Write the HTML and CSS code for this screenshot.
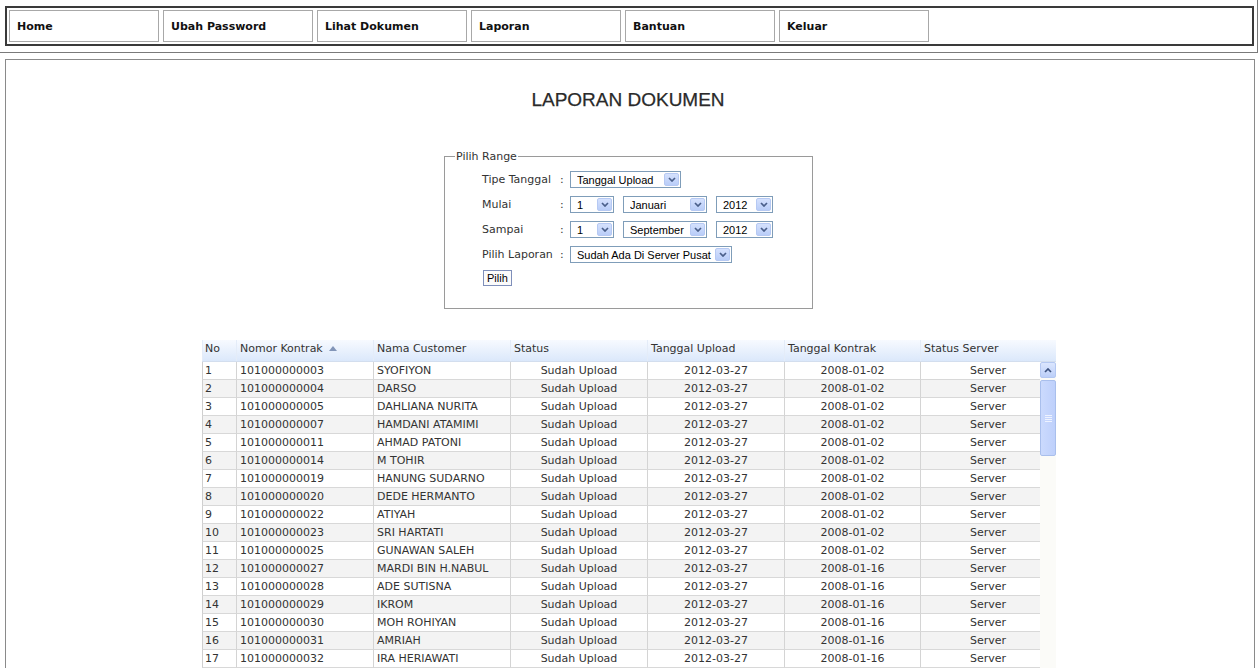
FILE: index.html
```html
<!DOCTYPE html>
<html>
<head>
<meta charset="utf-8">
<title>Laporan Dokumen</title>
<link rel="stylesheet" href="styles.css">
</head>
<body>
<div class="topframe">
  <nav class="nav">
    <a class="nav-btn">Home</a>
    <a class="nav-btn">Ubah Password</a>
    <a class="nav-btn">Lihat Dokumen</a>
    <a class="nav-btn">Laporan</a>
    <a class="nav-btn">Bantuan</a>
    <a class="nav-btn">Keluar</a>
  </nav>
</div>
<main class="content">
  <h1 class="title">LAPORAN DOKUMEN</h1>
  <fieldset class="range">
    <legend>Pilih Range</legend>
    <div class="range-body">
      <div class="form-row">
        <span class="lbl">Tipe Tanggal</span><span class="colon">:</span>
        <div class="ctrls"><span class="sel w-tipe"><span class="sel-txt">Tanggal Upload</span><span class="arr"><svg width="8" height="5" viewBox="0 0 8 5"><path d="M1 1L4 4L7 1" stroke="#4a5f8a" stroke-width="1.7" fill="none"/></svg></span></span></div>
      </div>
      <div class="form-row">
        <span class="lbl">Mulai</span><span class="colon">:</span>
        <div class="ctrls">
          <span class="sel w-day"><span class="sel-txt">1</span><span class="arr"><svg width="8" height="5" viewBox="0 0 8 5"><path d="M1 1L4 4L7 1" stroke="#4a5f8a" stroke-width="1.7" fill="none"/></svg></span></span>
          <span class="sel w-month"><span class="sel-txt">Januari</span><span class="arr"><svg width="8" height="5" viewBox="0 0 8 5"><path d="M1 1L4 4L7 1" stroke="#4a5f8a" stroke-width="1.7" fill="none"/></svg></span></span>
          <span class="sel w-year"><span class="sel-txt">2012</span><span class="arr"><svg width="8" height="5" viewBox="0 0 8 5"><path d="M1 1L4 4L7 1" stroke="#4a5f8a" stroke-width="1.7" fill="none"/></svg></span></span>
        </div>
      </div>
      <div class="form-row">
        <span class="lbl">Sampai</span><span class="colon">:</span>
        <div class="ctrls">
          <span class="sel w-day"><span class="sel-txt">1</span><span class="arr"><svg width="8" height="5" viewBox="0 0 8 5"><path d="M1 1L4 4L7 1" stroke="#4a5f8a" stroke-width="1.7" fill="none"/></svg></span></span>
          <span class="sel w-month"><span class="sel-txt">September</span><span class="arr"><svg width="8" height="5" viewBox="0 0 8 5"><path d="M1 1L4 4L7 1" stroke="#4a5f8a" stroke-width="1.7" fill="none"/></svg></span></span>
          <span class="sel w-year"><span class="sel-txt">2012</span><span class="arr"><svg width="8" height="5" viewBox="0 0 8 5"><path d="M1 1L4 4L7 1" stroke="#4a5f8a" stroke-width="1.7" fill="none"/></svg></span></span>
        </div>
      </div>
      <div class="form-row">
        <span class="lbl">Pilih Laporan</span><span class="colon">:</span>
        <div class="ctrls"><span class="sel w-lap"><span class="sel-txt">Sudah Ada Di Server Pusat</span><span class="arr"><svg width="8" height="5" viewBox="0 0 8 5"><path d="M1 1L4 4L7 1" stroke="#4a5f8a" stroke-width="1.7" fill="none"/></svg></span></span></div>
      </div>
      <div class="btn-row"><button class="btn">Pilih</button></div>
    </div>
  </fieldset>

  <div class="grid">
    <div class="grow ghead">
      <div class="hc">No</div>
      <div class="hc">Nomor Kontrak <svg class="sort" width="8" height="5" viewBox="0 0 8 5"><path d="M0 5L4 0L8 5Z" fill="#8295b8"/></svg></div>
      <div class="hc">Nama Customer</div>
      <div class="hc">Status</div>
      <div class="hc">Tanggal Upload</div>
      <div class="hc">Tanggal Kontrak</div>
      <div class="hc">Status Server</div>
    </div>
    <div class="gbody">
      <div class="grow"><div class="c">1</div><div class="c">101000000003</div><div class="c">SYOFIYON</div><div class="c ctr">Sudah Upload</div><div class="c ctr">2012-03-27</div><div class="c ctr">2008-01-02</div><div class="c ctr">Server</div></div>
      <div class="grow"><div class="c">2</div><div class="c">101000000004</div><div class="c">DARSO</div><div class="c ctr">Sudah Upload</div><div class="c ctr">2012-03-27</div><div class="c ctr">2008-01-02</div><div class="c ctr">Server</div></div>
      <div class="grow"><div class="c">3</div><div class="c">101000000005</div><div class="c">DAHLIANA NURITA</div><div class="c ctr">Sudah Upload</div><div class="c ctr">2012-03-27</div><div class="c ctr">2008-01-02</div><div class="c ctr">Server</div></div>
      <div class="grow"><div class="c">4</div><div class="c">101000000007</div><div class="c">HAMDANI ATAMIMI</div><div class="c ctr">Sudah Upload</div><div class="c ctr">2012-03-27</div><div class="c ctr">2008-01-02</div><div class="c ctr">Server</div></div>
      <div class="grow"><div class="c">5</div><div class="c">101000000011</div><div class="c">AHMAD PATONI</div><div class="c ctr">Sudah Upload</div><div class="c ctr">2012-03-27</div><div class="c ctr">2008-01-02</div><div class="c ctr">Server</div></div>
      <div class="grow"><div class="c">6</div><div class="c">101000000014</div><div class="c">M TOHIR</div><div class="c ctr">Sudah Upload</div><div class="c ctr">2012-03-27</div><div class="c ctr">2008-01-02</div><div class="c ctr">Server</div></div>
      <div class="grow"><div class="c">7</div><div class="c">101000000019</div><div class="c">HANUNG SUDARNO</div><div class="c ctr">Sudah Upload</div><div class="c ctr">2012-03-27</div><div class="c ctr">2008-01-02</div><div class="c ctr">Server</div></div>
      <div class="grow"><div class="c">8</div><div class="c">101000000020</div><div class="c">DEDE HERMANTO</div><div class="c ctr">Sudah Upload</div><div class="c ctr">2012-03-27</div><div class="c ctr">2008-01-02</div><div class="c ctr">Server</div></div>
      <div class="grow"><div class="c">9</div><div class="c">101000000022</div><div class="c">ATIYAH</div><div class="c ctr">Sudah Upload</div><div class="c ctr">2012-03-27</div><div class="c ctr">2008-01-02</div><div class="c ctr">Server</div></div>
      <div class="grow"><div class="c">10</div><div class="c">101000000023</div><div class="c">SRI HARTATI</div><div class="c ctr">Sudah Upload</div><div class="c ctr">2012-03-27</div><div class="c ctr">2008-01-02</div><div class="c ctr">Server</div></div>
      <div class="grow"><div class="c">11</div><div class="c">101000000025</div><div class="c">GUNAWAN SALEH</div><div class="c ctr">Sudah Upload</div><div class="c ctr">2012-03-27</div><div class="c ctr">2008-01-02</div><div class="c ctr">Server</div></div>
      <div class="grow"><div class="c">12</div><div class="c">101000000027</div><div class="c">MARDI BIN H.NABUL</div><div class="c ctr">Sudah Upload</div><div class="c ctr">2012-03-27</div><div class="c ctr">2008-01-16</div><div class="c ctr">Server</div></div>
      <div class="grow"><div class="c">13</div><div class="c">101000000028</div><div class="c">ADE SUTISNA</div><div class="c ctr">Sudah Upload</div><div class="c ctr">2012-03-27</div><div class="c ctr">2008-01-16</div><div class="c ctr">Server</div></div>
      <div class="grow"><div class="c">14</div><div class="c">101000000029</div><div class="c">IKROM</div><div class="c ctr">Sudah Upload</div><div class="c ctr">2012-03-27</div><div class="c ctr">2008-01-16</div><div class="c ctr">Server</div></div>
      <div class="grow"><div class="c">15</div><div class="c">101000000030</div><div class="c">MOH ROHIYAN</div><div class="c ctr">Sudah Upload</div><div class="c ctr">2012-03-27</div><div class="c ctr">2008-01-16</div><div class="c ctr">Server</div></div>
      <div class="grow"><div class="c">16</div><div class="c">101000000031</div><div class="c">AMRIAH</div><div class="c ctr">Sudah Upload</div><div class="c ctr">2012-03-27</div><div class="c ctr">2008-01-16</div><div class="c ctr">Server</div></div>
      <div class="grow"><div class="c">17</div><div class="c">101000000032</div><div class="c">IRA HERIAWATI</div><div class="c ctr">Sudah Upload</div><div class="c ctr">2012-03-27</div><div class="c ctr">2008-01-16</div><div class="c ctr">Server</div></div>
      <div class="vscroll">
        <div class="sb-btn"><svg width="8" height="5" viewBox="0 0 8 5"><path d="M1 4L4 1L7 4" stroke="#3d5380" stroke-width="1.7" fill="none"/></svg></div>
        <div class="sb-thumb"><span class="grip"></span></div>
      </div>
    </div>
  </div>
</main>
</body>
</html>
```

FILE: styles.css
```css
* { box-sizing: border-box; }
html, body { margin: 0; padding: 0; background: #fff; }
body {
  font-family: "DejaVu Sans", Verdana, sans-serif;
  font-size: 11px;
  color: #333;
  overflow: hidden;
  height: 668px;
}

/* top frame */
.topframe {
  width: 1258px;
  height: 53px;
  border-right: 1px solid #7a7a7a;
  border-bottom: 1px solid #7a7a7a;
  padding: 6px 0 0 5px;
}
.nav {
  display: flex;
  gap: 4px;
  width: 1249px;
  height: 40px;
  border: 2px solid #3a3a3a;
  padding: 2px;
}
.nav-btn {
  display: flex;
  align-items: center;
  width: 150px;
  height: 32px;
  border: 1px solid #a8a8a8;
  padding-left: 7px;
  font-weight: bold;
  font-size: 11px;
  color: #111;
  text-decoration: none;
}

/* content */
.content {
  margin: 6px 0 0 5px;
  width: 1250px;
  height: 609px;
  overflow: hidden;
  border: 1px solid #8a8a8a;
  border-bottom: none;
}
.title {
  margin: 28px 0 0;
  text-align: center;
  font-family: "Liberation Sans", Arial, sans-serif;
  font-weight: normal;
  font-size: 19px;
  line-height: 24px;
  color: #2a2a2a;
  -webkit-text-stroke: 0.25px #2a2a2a;
  padding-right: 4px;
}

/* fieldset */
.range {
  width: 369px;
  margin: 38px 0 0 438px;
  border: 1px solid #9a9a9a;
  padding: 0;
}
.range legend {
  margin-left: 10px;
  padding: 0 1px;
  font-size: 11px;
  color: #333;
  line-height: 13px;
}
.range-body {
  padding: 4px 0 22px 37px;
}
.form-row {
  display: flex;
  align-items: center;
  height: 25px;
}
.lbl { width: 77px; white-space: nowrap; }
.colon { width: 11px; padding-left: 1px; }
.ctrls { display: flex; gap: 9px; }
.sel {
  display: flex;
  align-items: center;
  height: 17px;
  border: 1px solid #7f9db9;
  background: #fff;
  font-family: "Liberation Sans", Tahoma, Arial, sans-serif;
  font-size: 11px;
  color: #000;
  padding: 1px 1px 1px 6px;
}
.sel-txt { flex: 1; white-space: nowrap; overflow: hidden; }
.arr {
  display: flex;
  align-items: center;
  justify-content: center;
  width: 15px;
  height: 13px;
  border: 1px solid #b6c9f3;
  border-radius: 2px;
  background: linear-gradient(#d5e1fd, #b9cdf8);
}
.w-tipe { width: 111px; }
.w-day { width: 44px; }
.w-month { width: 84px; }
.w-year { width: 57px; }
.w-lap { width: 162px; }

.btn-row { padding-top: 3px; padding-left: 1px; }
.btn {
  height: 16px;
  padding: 0 3px;
  border: 1px solid #7f8fba;
  background: #fbfbfb;
  font-family: "Liberation Sans", Tahoma, Arial, sans-serif;
  font-size: 11px;
  line-height: 13px;
  color: #000;
}

/* data grid */
.grid {
  width: 854px;
  margin: 31px 0 0 196px;
}
.grow {
  display: grid;
  grid-template-columns: 35px 137px 137px 137px 137px 136px 135px;
}
.ghead {
  height: 22px;
  background: linear-gradient(#f7faff, #dbe8fb);
  border-bottom: 1px solid #d3deee;
}
.hc {
  line-height: 18px;
  padding: 0 3px;
  border-right: 1px solid #e4ecf8;
  color: #333;
  white-space: nowrap;
}
.hc:first-child { border-left: 1px solid #e4ecf8; padding-left: 2px; }
.hc:last-child { border-right: none; }
.sort { margin-left: 3px; vertical-align: 1px; }

.gbody { position: relative; }
.gbody .grow:nth-child(even) { background: #f3f3f3; }
.c {
  height: 18px;
  line-height: 17px;
  padding: 0 3px;
  border-right: 1px solid #d4d4d4;
  border-bottom: 1px solid #d8d8d8;
  white-space: nowrap;
  color: #333;
}
.c:first-child { border-left: 1px solid #cfcfcf; padding-left: 2px; }
.ctr { text-align: center; }

.vscroll {
  position: absolute;
  top: 0;
  right: 0;
  bottom: 0;
  width: 16px;
  background: #fbfbf8;
}
.sb-btn {
  height: 16px;
  border: 1px solid #b4c8f2;
  border-radius: 2px;
  background: linear-gradient(#dbe6fe, #bccff9);
  display: flex;
  align-items: center;
  justify-content: center;
}
.sb-thumb {
  margin-top: 2px;
  height: 76px;
  border: 1px solid #a9bfec;
  border-radius: 2px;
  background: linear-gradient(90deg, #cbdafd, #bed0fb);
  display: flex;
  align-items: center;
  justify-content: center;
}
.grip {
  width: 7px;
  height: 7px;
  background: repeating-linear-gradient(#eef3ff 0 1px, transparent 1px 2px);
}
```
